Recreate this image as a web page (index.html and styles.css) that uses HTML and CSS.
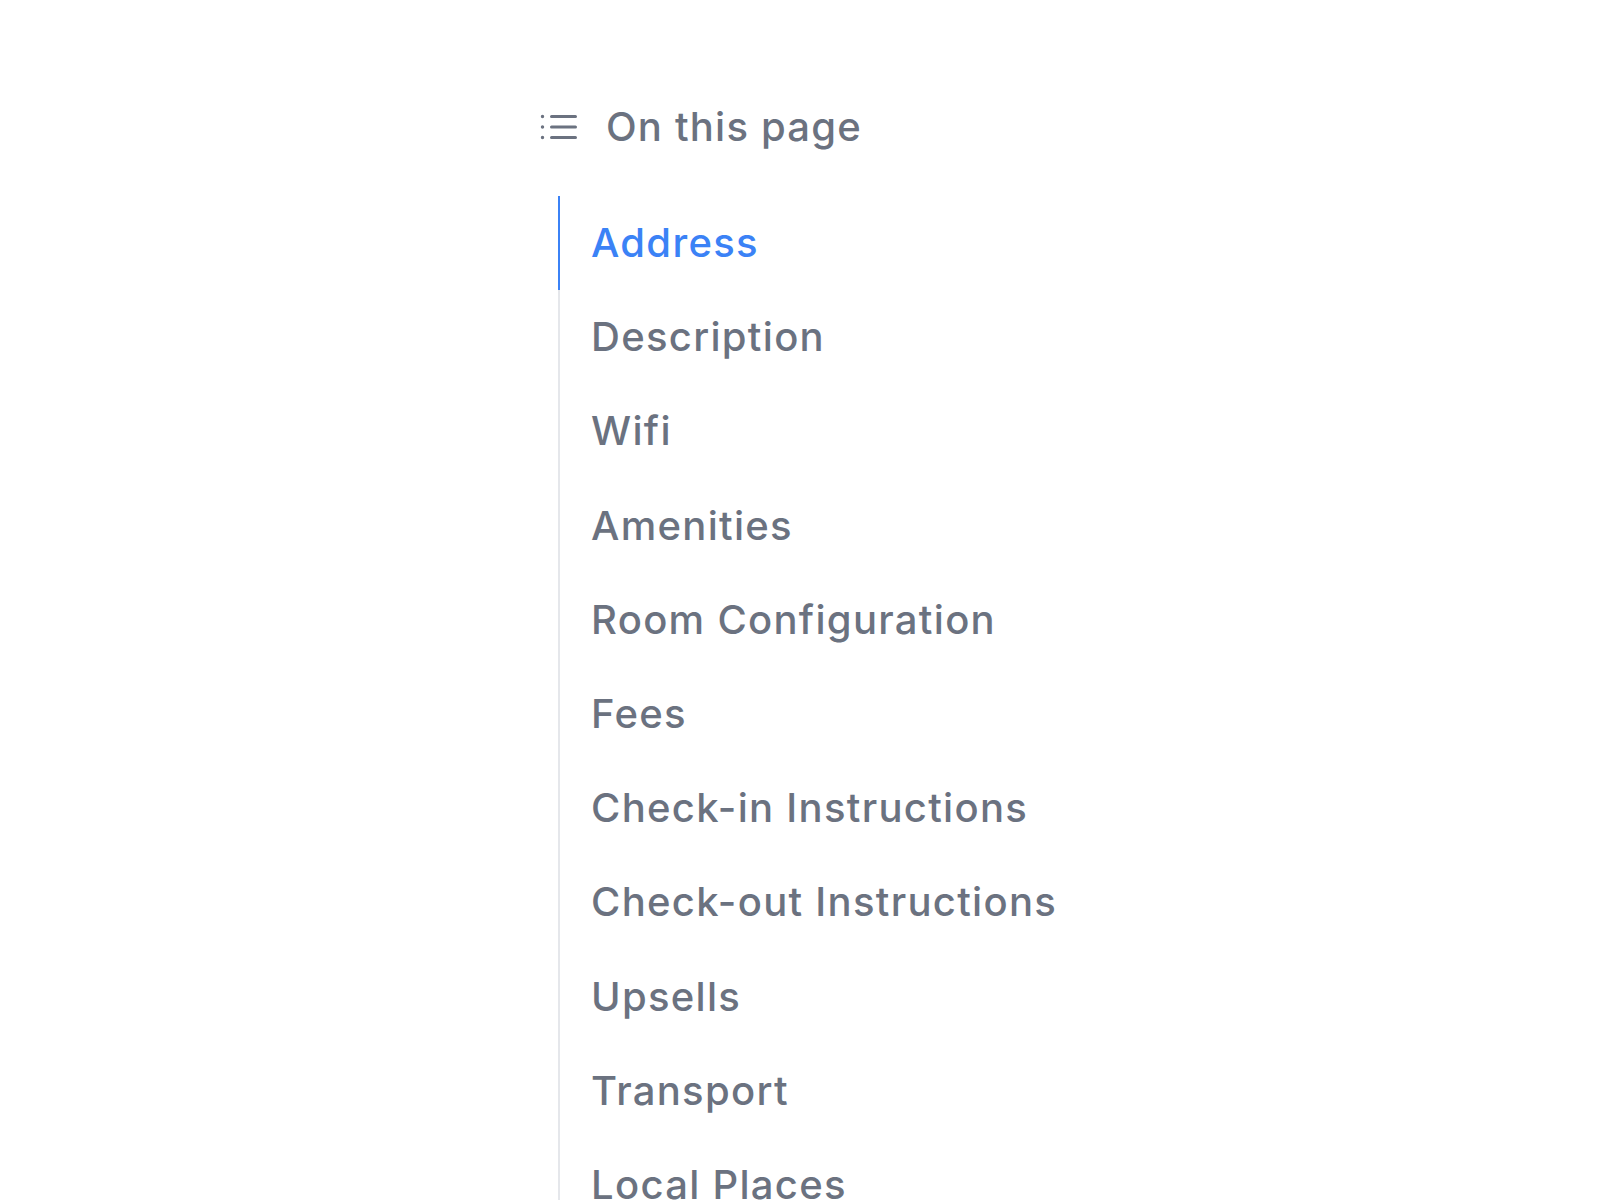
FILE: index.html
```html
<!DOCTYPE html>
<html lang="en">
<head>
<meta charset="utf-8">
<title>On this page</title>
<link rel="stylesheet" href="styles.css">
</head>
<body>
<aside class="toc">
  <div class="toc-header">
    <svg class="toc-icon" viewBox="0 0 24 24" fill="none" stroke="currentColor" stroke-width="1.5" stroke-linecap="round" stroke-linejoin="round">
      <path d="M8.25 6.75h12M8.25 12h12m-12 5.25h12"/>
      <circle cx="3.75" cy="6.75" r="0.55" fill="currentColor" stroke-width="0.6"/>
      <circle cx="3.75" cy="12" r="0.55" fill="currentColor" stroke-width="0.6"/>
      <circle cx="3.75" cy="17.25" r="0.55" fill="currentColor" stroke-width="0.6"/>
    </svg>
    <span class="toc-title">On this page</span>
  </div>
  <nav class="toc-nav">
    <a class="toc-link active" href="#address">Address</a>
    <a class="toc-link" href="#description">Description</a>
    <a class="toc-link" href="#wifi">Wifi</a>
    <a class="toc-link" href="#amenities">Amenities</a>
    <a class="toc-link" href="#rooms">Room Configuration</a>
    <a class="toc-link" href="#fees">Fees</a>
    <a class="toc-link" href="#checkin">Check-in Instructions</a>
    <a class="toc-link" href="#checkout">Check-out Instructions</a>
    <a class="toc-link" href="#upsells">Upsells</a>
    <a class="toc-link" href="#transport">Transport</a>
    <a class="toc-link" href="#local">Local Places</a>
  </nav>
</aside>
</body>
</html>
```

FILE: styles.css
```css
html, body {
  margin: 0;
  padding: 0;
  background: #ffffff;
  height: 100%;
  overflow: hidden;
}

body {
  font-family: Inter, "Noto Sans", "Liberation Sans", sans-serif;
  color: #6b7280;
}

.toc {
  padding: 103px 0 0 535px;
}

.toc-header {
  display: flex;
  align-items: center;
  gap: 23px;
  height: 48px;
}

.toc-icon {
  width: 48px;
  height: 48px;
  flex: none;
  color: #6b7280;
}

.toc-title {
  font-size: 40px;
  font-weight: 500;
  letter-spacing: 1.2px;
  line-height: 48px;
  color: #6b7280;
}

.toc-nav {
  display: flex;
  flex-direction: column;
  margin-top: 45px;
  margin-left: 23px;
  border-left: 2px solid #e5e7eb;
}

.toc-link {
  display: block;
  margin-left: -2px;
  padding: 17px 0 17px 31px;
  line-height: 60.2px;
  font-size: 40px;
  font-weight: 500;
  letter-spacing: 1.3px;
  color: #6b7280;
  text-decoration: none;
  border-left: 2px solid transparent;
}

.toc-link.active {
  color: #3b82f6;
  border-left-color: #3b82f6;
}
```
